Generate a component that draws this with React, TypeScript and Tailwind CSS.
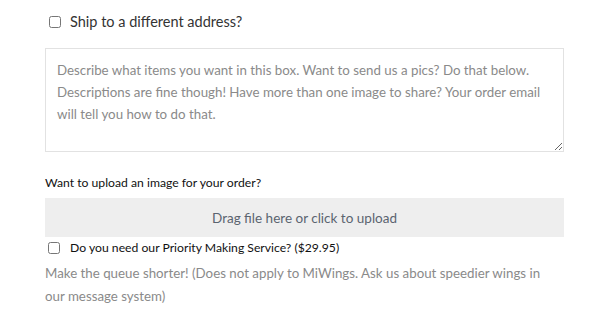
import React from "react";

export default function App() {
  return (
    <div className="w-[600px] h-[314px] bg-white overflow-hidden font-['Lato',sans-serif]">
      <div className="pl-[45px] pr-[36px]">
        {/* Ship to different address */}
        <label className="flex items-center h-[44px] pl-[4px] gap-[9px]">
          <input type="checkbox" className="w-[12px] h-[12px] m-0 accent-gray-500" />
          <span className="text-[14.5px] text-[#333]">Ship to a different address?</span>
        </label>

        {/* Notes */}
        <div className="mt-[4px]">
          <textarea
            className="block w-[519px] h-[104px] border border-[#e2e2e2] rounded-none pl-[11px] pr-[20px] py-[10px] text-[13.3px] leading-[22px] text-[#444] placeholder:text-[#8a8a8a] outline-none"
            placeholder="Describe what items you want in this box. Want to send us a pics? Do that below. Descriptions are fine though! Have more than one image to share? Your order email will tell you how to do that."
          />
        </div>

        {/* Upload */}
        <div className="mt-[22px] text-[12.2px] text-[#111]">Want to upload an image for your order?</div>
        <div className="mt-[6px] w-[519px] h-[39px] bg-[#eeeeee] flex items-center justify-center text-[13.5px] text-[#5b6470] cursor-pointer">
          Drag file here or click to upload
        </div>

        {/* Priority service */}
        <label className="flex items-center h-[18px] mt-[2px] pl-[3px] gap-[10px]">
          <input type="checkbox" className="w-[12px] h-[12px] m-0 accent-gray-500" />
          <span className="text-[12.2px] text-[#111]">Do you need our Priority Making Service? ($29.95)</span>
        </label>
        <p className="mt-[5px] text-[13.3px] leading-[23px] text-[#8a8a8a] w-[500px]">
          Make the queue shorter! (Does not apply to MiWings. Ask us about speedier wings in our message system)
        </p>
      </div>
    </div>
  );
}
